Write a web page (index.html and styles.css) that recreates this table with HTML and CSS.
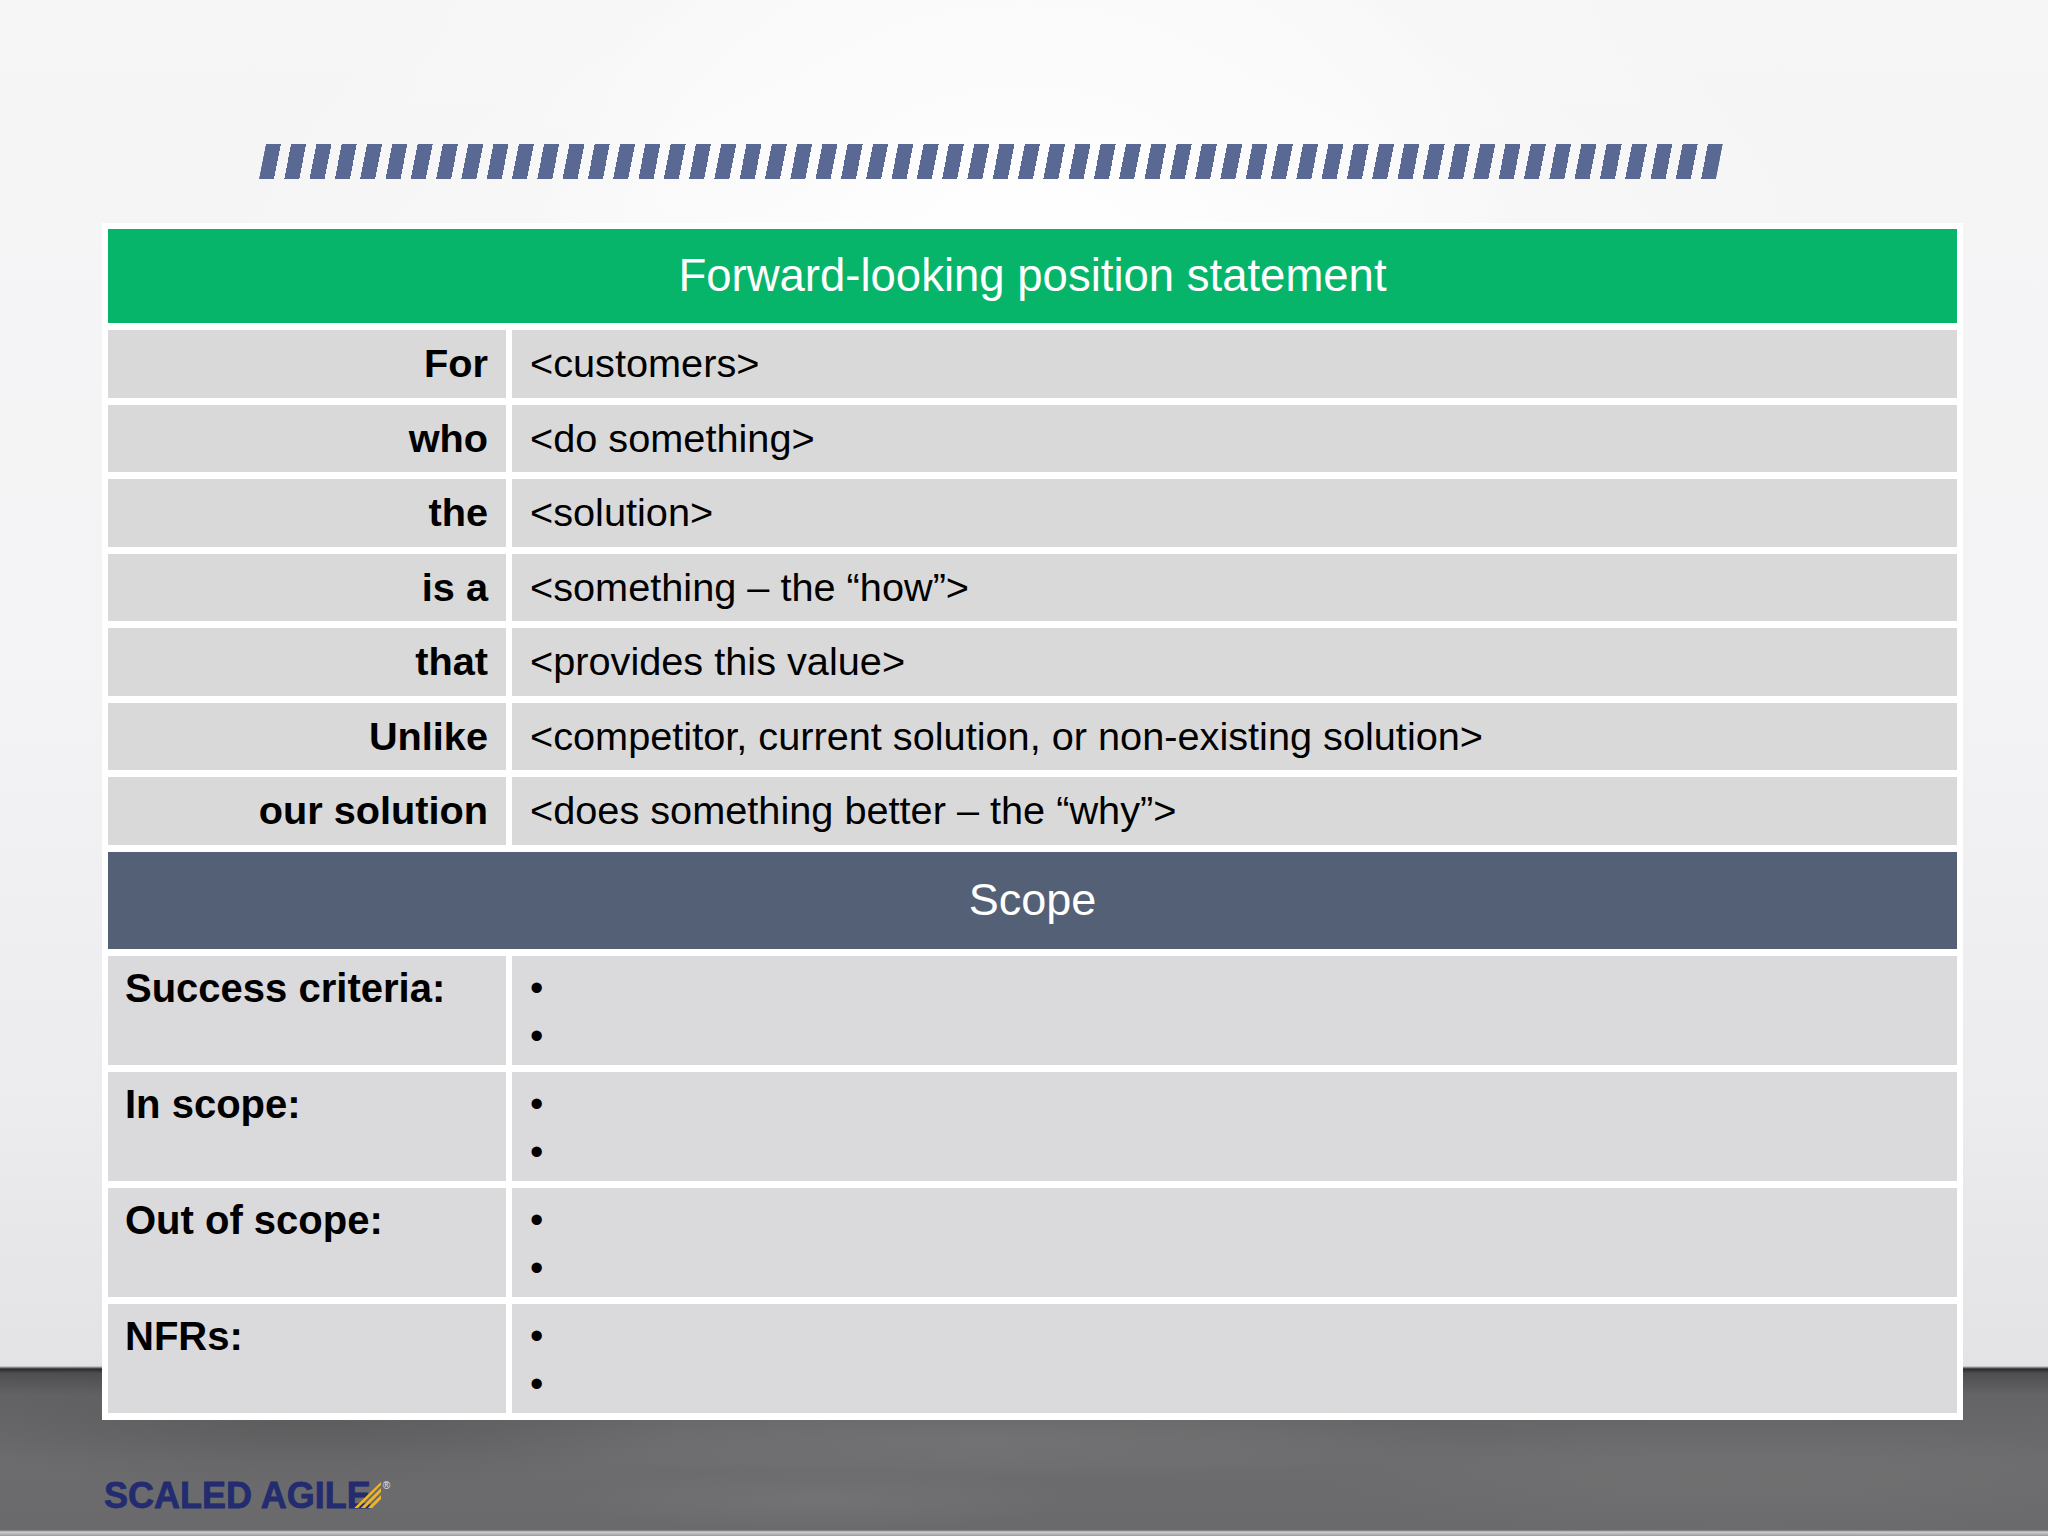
FILE: index.html
```html
<!DOCTYPE html>
<html lang="en">
<head>
<meta charset="utf-8">
<title>Forward-looking position statement</title>
<link rel="stylesheet" href="styles.css">
</head>
<body>
<div class="slide">
  <div class="stripes"></div>

  <div class="frame">
    <div class="band band-green">Forward-looking position statement</div>

    <div class="cell lab">For</div>
    <div class="cell val">&lt;customers&gt;</div>

    <div class="cell lab">who</div>
    <div class="cell val">&lt;do something&gt;</div>

    <div class="cell lab">the</div>
    <div class="cell val">&lt;solution&gt;</div>

    <div class="cell lab">is a</div>
    <div class="cell val">&lt;something – the “how”&gt;</div>

    <div class="cell lab">that</div>
    <div class="cell val">&lt;provides this value&gt;</div>

    <div class="cell lab">Unlike</div>
    <div class="cell val">&lt;competitor, current solution, or non-existing solution&gt;</div>

    <div class="cell lab">our solution</div>
    <div class="cell val">&lt;does something better – the “why”&gt;</div>

    <div class="band band-slate">Scope</div>

    <div class="scell slab">Success criteria:</div>
    <div class="scell sval"><ul class="bullets"><li></li><li></li></ul></div>

    <div class="scell slab">In scope:</div>
    <div class="scell sval"><ul class="bullets"><li></li><li></li></ul></div>

    <div class="scell slab">Out of scope:</div>
    <div class="scell sval"><ul class="bullets"><li></li><li></li></ul></div>

    <div class="scell slab">NFRs:</div>
    <div class="scell sval"><ul class="bullets"><li></li><li></li></ul></div>
  </div>

  <div class="logo">
    <span class="logo-text">SCALED AGILE</span>
    <svg class="logo-mark" width="30" height="27" viewBox="0 0 30 27" aria-hidden="true">
      <defs>
        <clipPath id="tri"><polygon points="29,0 29,26 2,26"/></clipPath>
      </defs>
      <g clip-path="url(#tri)" stroke="#f0b429" stroke-width="3">
        <line x1="0" y1="30" x2="30" y2="0"/>
        <line x1="7" y1="30" x2="37" y2="0"/>
        <line x1="-7" y1="30" x2="23" y2="0"/>
        <line x1="-14" y1="30" x2="16" y2="0"/>
        <line x1="14" y1="30" x2="44" y2="0"/>
      </g>
    </svg>
    <span class="reg">®</span>
  </div>
</div>
</body>
</html>
```

FILE: styles.css
```css
* { box-sizing: border-box; }

html, body {
  margin: 0;
  padding: 0;
}

body {
  font-family: "Liberation Sans", Arial, sans-serif;
  color: #000;
}

.slide {
  width: 2048px;
  height: 1536px;
  overflow: hidden;
  display: flex;
  flex-direction: column;
  background:
    radial-gradient(ellipse 520px 420px at 50% 18%, rgba(255,255,255,1) 0%, rgba(255,255,255,0) 100%),
    radial-gradient(ellipse 900px 700px at 50% 30%, rgba(255,255,255,0.7) 0%, rgba(255,255,255,0) 100%),
    radial-gradient(ellipse 500px 40px at 48% 1440px, rgba(140,140,140,0.25), rgba(140,140,140,0) 100%),
    radial-gradient(ellipse 420px 60px at 85% 1480px, rgba(130,130,130,0.2), rgba(130,130,130,0) 100%),
    radial-gradient(ellipse 380px 70px at 15% 1420px, rgba(60,60,60,0.25), rgba(60,60,60,0) 100%),
    radial-gradient(ellipse 260px 30px at 40% 1500px, rgba(150,150,150,0.18), rgba(150,150,150,0) 100%),
    radial-gradient(ellipse 200px 40px at 70% 1410px, rgba(90,90,90,0.18), rgba(90,90,90,0) 100%),
    linear-gradient(to bottom,
      #f6f6f7 0px,
      #f3f3f5 700px,
      #ececee 1100px,
      #e3e3e5 1366px,
      #2a2a2c 1369px,
      #4e4e50 1373px,
      #646466 1395px,
      #6c6c6e 1460px,
      #6a6a6c 1530px,
      #cfcfcf 1532px,
      #9a9a9a 1536px);
}

/* decorative hatched bar under the (empty) title area */
.stripes {
  margin: 144px 0 0 259px;
  width: 1457px;
  height: 35px;
  flex: none;
  background: repeating-linear-gradient(90deg,
    #5a6894 0px, #5a6894 15px,
    transparent 15px, transparent 25.3px);
  transform: skewX(-11deg);
  transform-origin: 0 100%;
}

/* table frame */
.frame {
  margin: 44px 0 0 102px;
  width: 1861px;
  flex: none;
  background: #ffffff;
  padding: 6px 6px 7px 6px;
  display: grid;
  grid-template-columns: 398px 1445px;
  column-gap: 6px;
  row-gap: 7px;
}

.band {
  grid-column: 1 / 3;
  display: flex;
  align-items: center;
  justify-content: center;
  color: #ffffff;
}

.band-green {
  height: 94px;
  background: #06b56a;
  font-size: 45.5px;
}

.band-slate {
  height: 97px;
  background: #536076;
  font-size: 45px;
}

.cell {
  height: 67.5px;
  background: #d9d9d9;
  display: flex;
  align-items: center;
  font-size: 39.7px;
  white-space: nowrap;
}

.lab {
  justify-content: flex-end;
  padding-right: 18px;
  font-weight: bold;
}

.val {
  padding-left: 18px;
}

.scell {
  height: 109px;
  background: #dad9db;
  font-size: 40px;
  line-height: 48px;
  padding-top: 8px;
}

.slab {
  font-weight: bold;
  padding-left: 17px;
}

.sval {
  padding-left: 18px;
  font-size: 38px;
}

.bullets {
  list-style: none;
  margin: 0;
  padding: 0;
}

.bullets li {
  height: 48px;
}

.bullets li::before {
  content: "•";
}

/* footer logo */
.logo {
  margin: 58px 0 0 104px;
  display: flex;
  align-items: flex-start;
  height: 35px;
  line-height: 35px;
}

.logo-text {
  font-size: 36px;
  font-weight: bold;
  color: #232c6e;
  -webkit-text-stroke: 0.8px #232c6e;
}

.logo-mark {
  margin: 4px 0 0 -19px;
  flex: none;
}

.reg {
  font-size: 10px;
  line-height: 12px;
  color: #e8e8e8;
  margin: 2px 0 0 1px;
}
```
